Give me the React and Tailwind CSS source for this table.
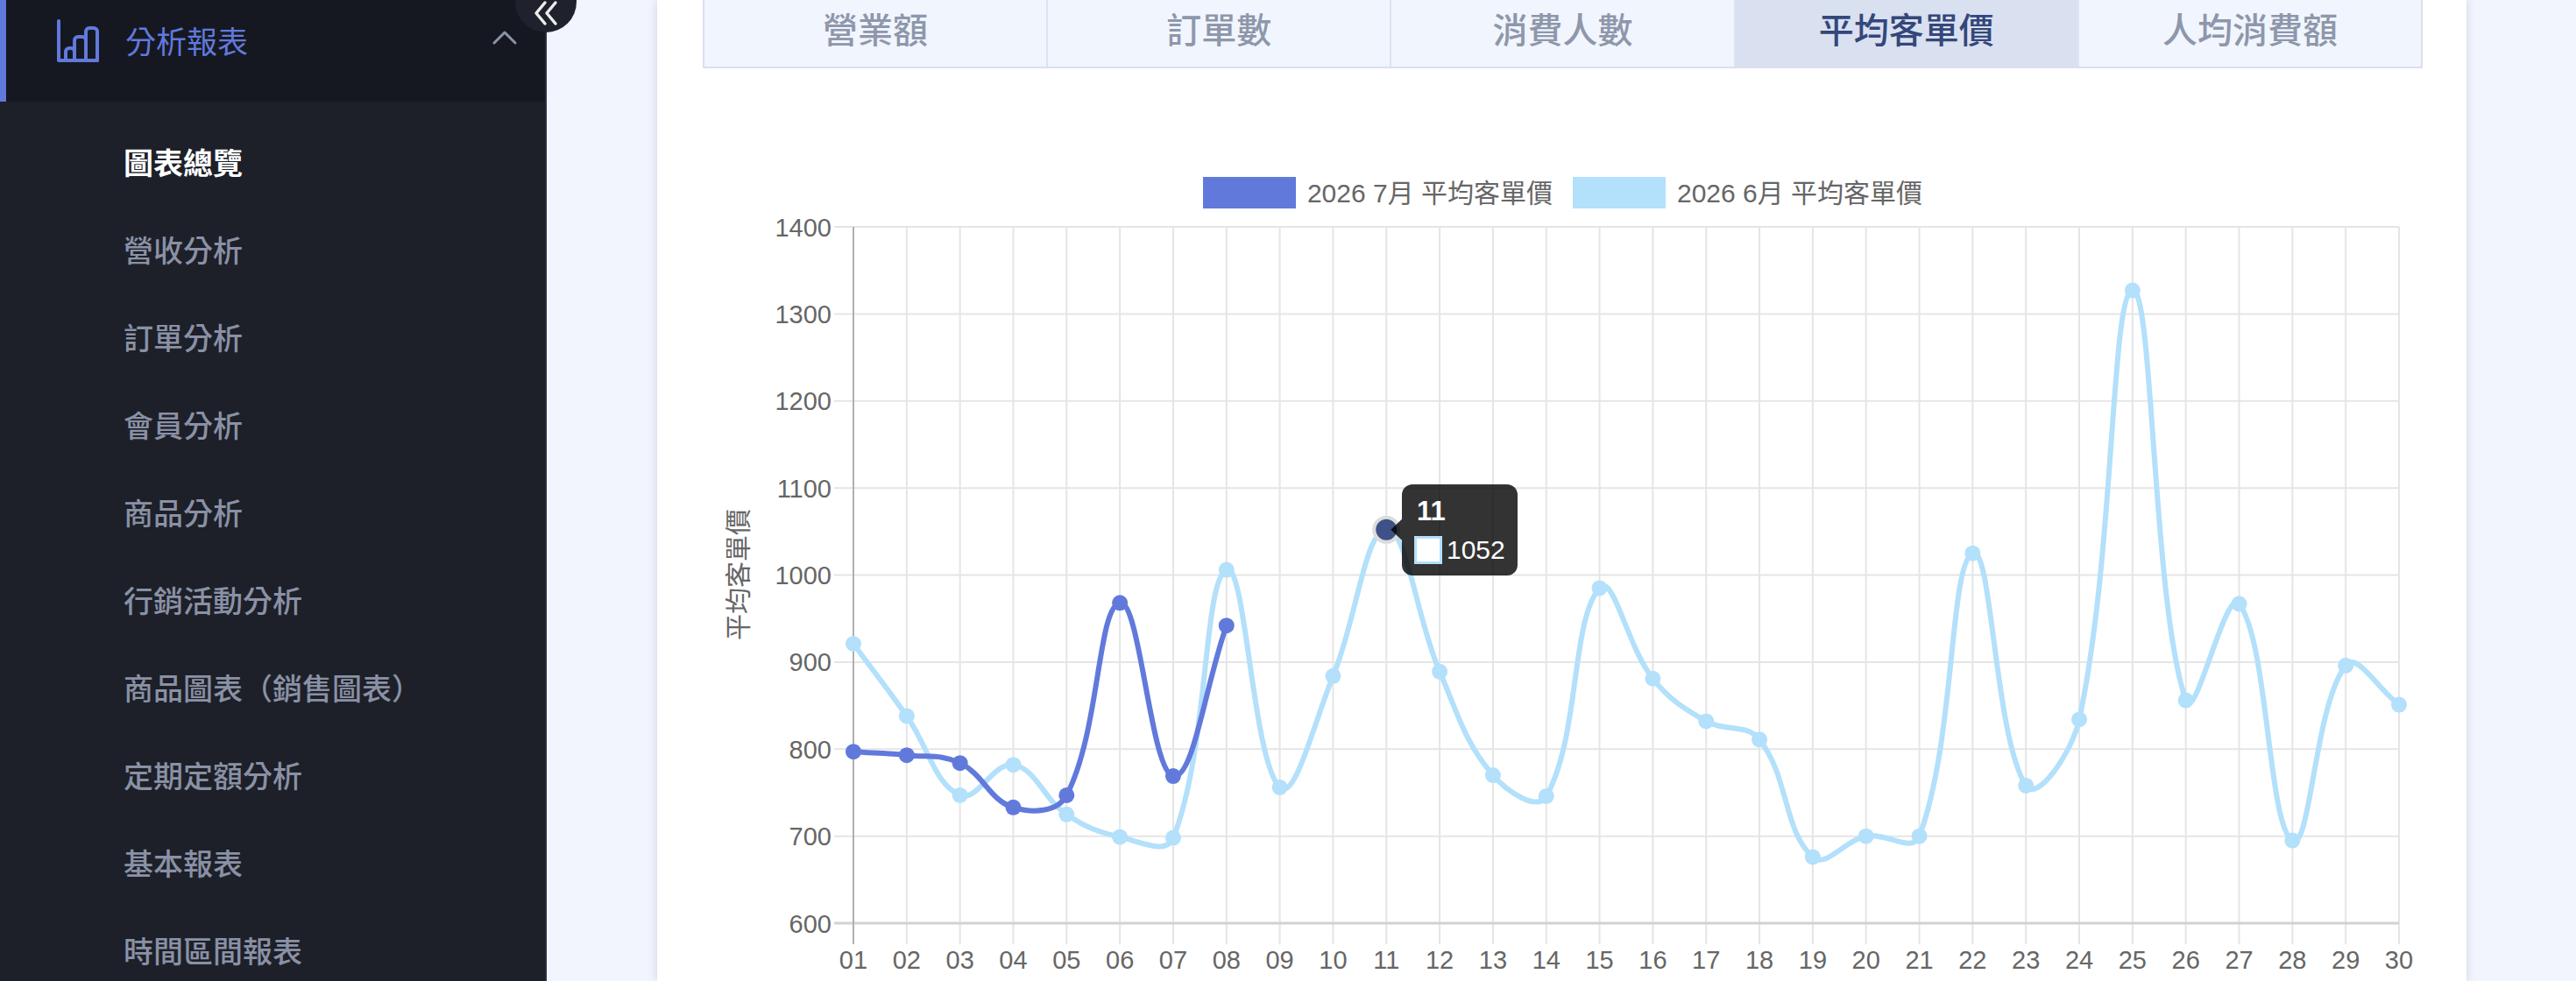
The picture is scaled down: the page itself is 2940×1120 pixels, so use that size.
import React from "react";

const MENU = [
  "圖表總覽",
  "營收分析",
  "訂單分析",
  "會員分析",
  "商品分析",
  "行銷活動分析",
  "商品圖表（銷售圖表）",
  "定期定額分析",
  "基本報表",
  "時間區間報表",
];

const TABS = ["營業額", "訂單數", "消費人數", "平均客單價", "人均消費額"];

const JULY = [797, 793, 784, 733, 747, 968, 769, 942];
const JUNE = [
  921, 838, 747, 782, 725, 699, 698, 1006, 756, 884, 1052, 889, 770, 746, 985,
  881, 832, 811, 676, 700, 700, 1025, 758, 834, 1327, 856, 967, 695, 896, 851,
];

const DARK = "#6279dc";
const LIGHT = "#b3e0fb";
const FONT = "'Liberation Sans', 'Noto Sans CJK TC', sans-serif";

// chart geometry (svg coords)
const X0 = 172;
const X1 = 1936;
const Y0 = 816;
const YT = 21;
const xAt = (i) => X0 + (i * (X1 - X0)) / 29;
const yAt = (v) => Y0 - ((v - 600) * (Y0 - YT)) / 800;

// same spline chart.js uses for tension curves
function curve(values, tension = 0.4) {
  const pts = values.map((v, i) => ({ x: xAt(i), y: yAt(v) }));
  const cps = pts.map((p, i) => {
    const prev = pts[i - 1] || p;
    const next = pts[i + 1] || p;
    const d01 = Math.hypot(p.x - prev.x, p.y - prev.y);
    const d12 = Math.hypot(next.x - p.x, next.y - p.y);
    const s01 = d01 / (d01 + d12) || 0;
    const s12 = d12 / (d01 + d12) || 0;
    const fa = tension * s01;
    const fb = tension * s12;
    return {
      px: p.x - fa * (next.x - prev.x),
      py: p.y - fa * (next.y - prev.y),
      nx: p.x + fb * (next.x - prev.x),
      ny: p.y + fb * (next.y - prev.y),
    };
  });
  let d = `M${pts[0].x},${pts[0].y}`;
  for (let i = 1; i < pts.length; i++) {
    d += ` C${cps[i - 1].nx},${cps[i - 1].ny} ${cps[i].px},${cps[i].py} ${pts[i].x},${pts[i].y}`;
  }
  return d;
}

function ChartIcon() {
  return (
    <svg width="52" height="52" viewBox="0 0 52 52" fill="none" stroke={DARK} strokeWidth="4" strokeLinecap="round" strokeLinejoin="round">
      <path d="M3 3 V48 H47" />
      <path d="M11 48 V38 a4 4 0 0 1 4 -4 h2 a4 4 0 0 1 4 4 V48" />
      <path d="M21 48 V25 a4 4 0 0 1 4 -4 h5 a4 4 0 0 1 4 4 V48" />
      <path d="M34 48 V15 a4 4 0 0 1 4 -4 h5 a4 4 0 0 1 4 4 V48" />
    </svg>
  );
}

function Sidebar() {
  return (
    <aside className="relative z-10 w-[624px] shrink-0 bg-[#1d2029] border-r-2 border-[#283045] font-['Noto_Sans_CJK_TC',sans-serif]">
      <div className="flex h-[116px] items-center bg-[#151821] pb-[24px]">
        <div className="w-[7px] self-stretch bg-[#6279dc] -mb-[24px]" />
        <div className="ml-[57px] mt-[2px]">
          <ChartIcon />
        </div>
        <span className="ml-[27px] text-[35px] text-[#6279dc]">分析報表</span>
        <svg className="ml-auto mr-[32px] mt-[-6px]" width="28" height="16" viewBox="0 0 28 16" fill="none" stroke="#8c93a6" strokeWidth="3" strokeLinecap="round" strokeLinejoin="round">
          <path d="M2 14 L14 2 L26 14" />
        </svg>
      </div>
      <ul className="pt-[18px]">
        {MENU.map((item, i) => (
          <li
            key={item}
            className={
              "flex h-[100px] items-center pl-[141px] text-[34px] " +
              (i === 0 ? "font-bold text-white" : "font-medium text-[#8a91a5]")
            }
          >
            {item}
          </li>
        ))}
      </ul>
      <button className="absolute right-[-36px] top-[-33px] flex h-[70px] w-[70px] items-center justify-center rounded-full bg-[#1f222c]">
        <svg className="mt-[26px]" width="28" height="30" viewBox="0 0 28 30" fill="none" stroke="#ececec" strokeWidth="3.5" strokeLinecap="round" strokeLinejoin="round">
          <path d="M13 3 L3 15 L13 27" />
          <path d="M25 3 L15 15 L25 27" />
        </svg>
      </button>
    </aside>
  );
}

function Tabs() {
  return (
    <div className="flex h-[78px] border-x-2 border-b-2 border-[#d9e0ef]">
      {TABS.map((t, i) => (
        <div
          key={t}
          className={
            "flex flex-1 items-center justify-center pb-[12px] text-[40px] font-medium " +
            (i > 0 ? "border-l-2 border-[#dde3f0] " : "") +
            (i === 3 ? "bg-[#d9e0f0] text-[#34477a]" : "bg-[#f1f5fd] text-[#8e97ab]")
          }
        >
          {t}
        </div>
      ))}
    </div>
  );
}

function Legend() {
  return (
    <div className="flex h-[36px] items-center justify-center gap-[23px] font-['Liberation_Sans','Noto_Sans_CJK_TC',sans-serif] text-[30px] text-[#666]">
      <div className="flex items-center gap-[13px]">
        <span className="h-[36px] w-[106px] bg-[#6279dc]" />
        <span>2026 7月 平均客單價</span>
      </div>
      <div className="flex items-center gap-[13px]">
        <span className="h-[36px] w-[106px] bg-[#b3e0fb]" />
        <span>2026 6月 平均客單價</span>
      </div>
    </div>
  );
}

function Chart() {
  const ticks = [600, 700, 800, 900, 1000, 1100, 1200, 1300, 1400];
  const days = Array.from({ length: 30 }, (_, i) => String(i + 1).padStart(2, "0"));
  const hx = xAt(10);
  const hy = yAt(JUNE[10]);
  return (
    <svg width="1963" height="900" viewBox="0 0 1963 900" fontFamily={FONT}>
      {/* grid */}
      {days.map((d, i) => (
        <line key={d} x1={xAt(i)} x2={xAt(i)} y1={YT} y2={840} stroke={i === 0 ? "#b0b0b0" : "#e5e5e5"} strokeWidth="2" />
      ))}
      {ticks.map((t) => (
        <line key={t} x1={150} x2={X1} y1={yAt(t)} y2={yAt(t)} stroke={t === 600 ? "#d2d2d2" : "#e5e5e5"} strokeWidth={t === 600 ? 3 : 2} />
      ))}
      <line x1={X0} x2={X0} y1={YT} y2={840} stroke="#b0b0b0" strokeWidth="2" />

      {/* labels */}
      {ticks.map((t) => (
        <text key={t} x={147} y={yAt(t) + 10.5} textAnchor="end" fontSize="29" fill="#666">
          {t}
        </text>
      ))}
      {days.map((d, i) => (
        <text key={d} x={xAt(i)} y={868} textAnchor="middle" fontSize="29" fill="#666">
          {d}
        </text>
      ))}
      <text x={38} y={418} transform="rotate(-90 38 418)" textAnchor="middle" dominantBaseline="central" fontSize="30" fill="#666" fontFamily="'Noto Sans CJK TC', sans-serif">
        平均客單價
      </text>

      {/* june */}
      <path d={curve(JUNE)} fill="none" stroke={LIGHT} strokeWidth="6" />
      {JUNE.map((v, i) => (
        <circle key={i} cx={xAt(i)} cy={yAt(v)} r="9" fill={LIGHT} />
      ))}

      {/* july */}
      <path d={curve(JULY)} fill="none" stroke={DARK} strokeWidth="6" />
      {JULY.map((v, i) => (
        <circle key={i} cx={xAt(i)} cy={yAt(v)} r="9" fill={DARK} />
      ))}

      {/* hovered point + tooltip */}
      <circle cx={hx} cy={hy} r="14" fill="#3f5189" stroke="#dcdcdc" strokeWidth="4" />
      <path d={`M${hx + 5},${hy} L798,${hy - 12} L798,${hy + 12} Z`} fill="rgba(0,0,0,0.8)" />
      <rect x="798" y="315" width="132" height="104" rx="12" fill="rgba(0,0,0,0.8)" />
      <text x="815" y="356" fontSize="31" fontWeight="bold" fill="#fff">
        11
      </text>
      <rect x="813.5" y="375.5" width="29" height="29" fill="#fff" stroke={LIGHT} strokeWidth="3" />
      <text x="849" y="400" fontSize="30" fill="#fff">
        1052
      </text>
    </svg>
  );
}

export default function App() {
  return (
    <div className="flex h-[1120px] w-[2940px] overflow-hidden bg-[#f2f5fd] font-['Noto_Sans_CJK_TC',sans-serif]">
      <Sidebar />
      <main className="flex-1 pl-[126px] pr-[125px]">
        <div className="h-full bg-white pl-[52px] pr-[50px] shadow-[0_0_10px_rgba(30,40,80,0.16)]">
          <Tabs />
          <div className="mt-[124px]">
            <Legend />
          </div>
          <Chart />
        </div>
      </main>
    </div>
  );
}
